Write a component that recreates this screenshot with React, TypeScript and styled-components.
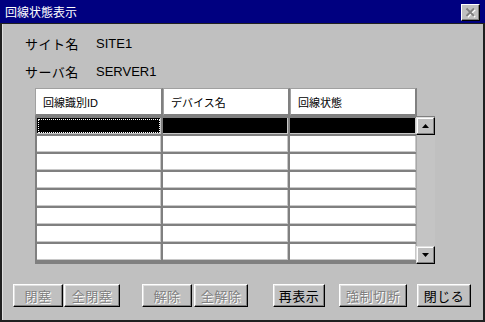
import React from 'react';
import styled, { createGlobalStyle } from 'styled-components';

const GlobalStyle = createGlobalStyle`
  html, body {
    margin: 0;
    padding: 0;
    background: #c0c0c0;
  }
  * { box-sizing: border-box; }
`;

const FONT = `"Liberation Sans", "Noto Sans CJK JP", sans-serif`;

const Window = styled.div`
  width: 485px;
  height: 322px;
  display: flex;
  flex-direction: column;
  background: #c0c0c0;
  font-family: ${FONT};
`;

const TitleBar = styled.div`
  height: 24px;
  background: #000080;
  border-bottom: 1px solid #202020;
  display: flex;
  align-items: center;
  justify-content: space-between;
  padding: 0 5px 0 5px;
  color: #fff;
  font-size: 12px;
  font-family: "Noto Sans CJK JP", sans-serif;
`;

const CloseButton = styled.div`
  width: 19px;
  height: 17px;
  margin-top: 1px;
  background: #c0c0c0;
  border: 1px solid;
  border-color: #fff #000 #000 #fff;
  box-shadow: inset -1px -1px #808080;
  display: flex;
  align-items: center;
  justify-content: center;
`;

const Body = styled.div`
  flex: 1;
  border-left: 2px solid #202020;
  border-right: 2px solid #202020;
  border-bottom: 2px solid #202020;
  box-shadow: inset 1px 0 #dfdfdf;
  display: flex;
  flex-direction: column;
`;

const Info = styled.div`
  padding: 5px 0 0 23px;
  display: grid;
  grid-template-columns: 71px auto;
  grid-auto-rows: 28px;
  align-items: center;
  font-size: 13px;
  color: #000;
`;

const Label = styled.span`
  font-family: "Noto Sans CJK JP", sans-serif;
  letter-spacing: 0.5px;
`;

const Value = styled.span`
  font-family: ${FONT};
`;

const TableWrap = styled.div`
  margin: 3px 0 0 33px;
  display: flex;
  flex-direction: column;
`;

const HeaderRow = styled.div`
  display: flex;
`;

const HeaderCell = styled.div<{ $w: number }>`
  width: ${p => p.$w}px;
  height: 28px;
  background: #fff;
  border-top: 1px solid #a0a0a0;
  border-left: 1px solid #a0a0a0;
  border-right: 2px solid #808080;
  border-bottom: 2px solid #808080;
  padding-left: 7px;
  display: flex;
  align-items: center;
  font-size: 11px;
  color: #000;
`;

const GridArea = styled.div`
  display: flex;
`;

const Rows = styled.div`
  display: grid;
  grid-template-columns: 124px 125px 126px;
  grid-auto-rows: 16px;
  column-gap: 2px;
  row-gap: 2px;
  padding: 2px 0 4px 2px;
  background: #808080;
`;

const Cell = styled.div<{ $selected?: boolean; $focus?: boolean }>`
  background: ${p => (p.$selected ? '#000' : '#fff')};
  border-right: 1px solid #c8c8c8;
  border-bottom: 1px solid #c8c8c8;
  ${p => p.$focus && `outline: 1px dotted #fff; outline-offset: -2px;`}
`;

const ScrollBar = styled.div`
  width: 19px;
  display: flex;
  flex-direction: column;
  background: #c0c0c0;
  border-top: 1px solid #808080;
`;

const ScrollTrack = styled.div`
  flex: 1;
  background: #c4c4c4;
  border-left: 1px solid #a8a8a8;
`;

const ScrollButton = styled.div`
  height: 18px;
  background: #c0c0c0;
  border: 1px solid;
  border-color: #dfdfdf #000 #000 #dfdfdf;
  box-shadow: inset -1px -1px #808080, inset 1px 1px #fff;
  display: flex;
  align-items: center;
  justify-content: center;
`;

const ButtonBar = styled.div`
  margin-top: 20px;
  padding-left: 11px;
  display: flex;
`;

const Button = styled.div<{ $w: number; $gap: number; $disabled?: boolean }>`
  width: ${p => p.$w}px;
  height: 23px;
  margin-left: ${p => p.$gap}px;
  background: #c0c0c0;
  border: 1px solid;
  border-color: #fff #000 #000 #fff;
  box-shadow: inset -1px -1px #808080, inset 1px 1px #dfdfdf;
  display: flex;
  align-items: center;
  justify-content: center;
  font-family: "Noto Sans CJK JP", sans-serif;
  font-size: 13px;
  letter-spacing: 0.5px;
  color: ${p => (p.$disabled ? '#808080' : '#000')};
  text-shadow: ${p => (p.$disabled ? '1px 1px 0 #fff' : 'none')};
`;

const Arrow = ({ down }: { down?: boolean }) => (
  <svg width="7" height="4" viewBox="0 0 7 4">
    <polygon points={down ? '0,0 7,0 3.5,4' : '3.5,0 7,4 0,4'} fill="#000" />
  </svg>
);

const buttons = [
  { label: '閉塞', w: 50, gap: 0, disabled: true },
  { label: '全閉塞', w: 56, gap: 1, disabled: true },
  { label: '解除', w: 50, gap: 22, disabled: true },
  { label: '全解除', w: 54, gap: 2, disabled: true },
  { label: '再表示', w: 52, gap: 25, disabled: false },
  { label: '強制切断', w: 68, gap: 14, disabled: true },
  { label: '閉じる', w: 54, gap: 10, disabled: false },
];

export default function App() {
  const rows = Array.from({ length: 8 }, (_, i) => i);

  return (
    <>
      <GlobalStyle />
      <Window>
        <TitleBar>
          <span>回線状態表示</span>
          <CloseButton>
            <svg width="12" height="11" viewBox="0 0 12 11">
              <path d="M2.5 2.5 L10 10 M10 2.5 L2.5 10" stroke="#fff" strokeWidth="2" />
              <path d="M1.5 1.5 L9 9 M9 1.5 L1.5 9" stroke="#808080" strokeWidth="2" />
            </svg>
          </CloseButton>
        </TitleBar>
        <Body>
          <Info>
            <Label>サイト名</Label>
            <Value>SITE1</Value>
            <Label>サーバ名</Label>
            <Value>SERVER1</Value>
          </Info>
          <TableWrap>
            <HeaderRow>
              <HeaderCell $w={128}>回線識別ID</HeaderCell>
              <HeaderCell $w={127}>デバイス名</HeaderCell>
              <HeaderCell $w={127}>回線状態</HeaderCell>
            </HeaderRow>
            <GridArea>
              <Rows>
                {rows.map(r => (
                  <React.Fragment key={r}>
                    <Cell $selected={r === 0} $focus={r === 0} />
                    <Cell $selected={r === 0} />
                    <Cell $selected={r === 0} />
                  </React.Fragment>
                ))}
              </Rows>
              <ScrollBar>
                <ScrollButton>
                  <Arrow />
                </ScrollButton>
                <ScrollTrack />
                <ScrollButton>
                  <Arrow down />
                </ScrollButton>
              </ScrollBar>
            </GridArea>
          </TableWrap>
          <ButtonBar>
            {buttons.map(b => (
              <Button key={b.label} $w={b.w} $gap={b.gap} $disabled={b.disabled}>
                {b.label}
              </Button>
            ))}
          </ButtonBar>
        </Body>
      </Window>
    </>
  );
}
